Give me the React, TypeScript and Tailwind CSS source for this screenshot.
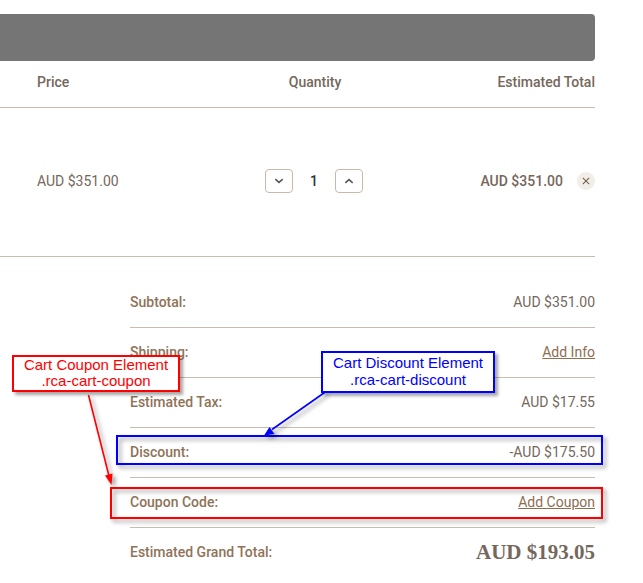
import { ReactNode } from "react";

type Highlight = "discount" | "coupon";

interface TotalRow {
  label: string;
  value: ReactNode;
  highlight?: Highlight;
}

const linkClass = "text-[#8f6d4f] underline";

const totals: TotalRow[] = [
  { label: "Subtotal:", value: "AUD $351.00" },
  { label: "Shipping:", value: <a href="#shipping" className={linkClass}>Add Info</a> },
  { label: "Estimated Tax:", value: "AUD $17.55" },
  { label: "Discount:", value: "-AUD $175.50", highlight: "discount" },
  {
    label: "Coupon Code:",
    value: <a href="#coupon" className={linkClass}>Add Coupon</a>,
    highlight: "coupon",
  },
];

const frames: Record<Highlight, string> = {
  discount: "-left-3.5 -right-2 top-[7px] h-[30px] border-[#0000ff]",
  coupon: "-left-5 -right-2 top-[9px] h-8 border-[#ff0000]",
};

function Chevron({ up = false }: { up?: boolean }) {
  return (
    <svg width="10" height="6" viewBox="0 0 10 6" fill="none" stroke="#555" strokeWidth="1.5" aria-hidden="true">
      <path d={up ? "M1.3 4.9 5 1.6l3.7 3.3" : "M1.3 1.1 5 4.4l3.7-3.3"} />
    </svg>
  );
}

const stepClass =
  "flex h-6 w-7 items-center justify-center rounded border border-[#cbb9a8] bg-white";

function CartTable() {
  return (
    <table className="w-full table-fixed border-collapse">
      <thead>
        <tr className="h-[46px] border-b border-[#c9bdb1] align-top">
          <th className="w-[240px] pt-[11px] pl-[37px] text-left font-medium">Price</th>
          <th className="w-[148px] pt-[11px] pl-0.5 text-center font-medium">Quantity</th>
          <th className="pt-[11px] text-right font-medium">Estimated Total</th>
        </tr>
      </thead>
      <tbody>
        <tr className="h-[149px] border-b border-[#c9bdb1]">
          <td className="pb-0.5 pl-[37px]">AUD $351.00</td>
          <td className="pb-0.5">
            <div className="flex items-center justify-center">
              <button type="button" aria-label="Decrease quantity" className={stepClass}>
                <Chevron />
              </button>
              <input
                aria-label="Quantity"
                defaultValue="1"
                className="w-[42px] bg-transparent text-center font-medium text-[#333]"
              />
              <button type="button" aria-label="Increase quantity" className={stepClass}>
                <Chevron up />
              </button>
            </div>
          </td>
          <td className="pb-0.5">
            <div className="flex items-center justify-end gap-3.5 font-medium">
              AUD $351.00
              <button
                type="button"
                aria-label="Remove item"
                className="flex size-[18px] items-center justify-center rounded-full bg-[#f1ede8]"
              >
                <svg width="8" height="8" viewBox="0 0 8 8" stroke="#7a6048" strokeWidth="1.1" aria-hidden="true">
                  <path d="M.8.8l6.4 6.4M7.2.8.8 7.2" />
                </svg>
              </button>
            </div>
          </td>
        </tr>
      </tbody>
    </table>
  );
}

function Annotations() {
  return (
    <>
      <svg
        className="pointer-events-none absolute top-0 left-0 drop-shadow-[3px_3px_2px_rgba(0,0,0,0.4)]"
        width="643"
        height="583"
        viewBox="0 0 643 583"
        aria-hidden="true"
      >
        <path d="M88.5 395 109 476" stroke="#ff0000" strokeWidth="1.6" />
        <path d="M111.5 485 105 475.5 112.5 473.5z" fill="#ff0000" />
        <path d="M326 391.5 272 429.5" stroke="#0000ff" strokeWidth="1.6" />
        <path d="M264 435.5 269.5 427 274.5 434z" fill="#0000ff" />
      </svg>
      <div className="absolute top-[355px] left-3 h-[37px] w-[168px] border-2 border-[#ff0000] bg-white text-center font-['Liberation_Sans',Arial,sans-serif] text-[15px] leading-4 text-[#ff0000] shadow-[3px_3px_3px_rgba(0,0,0,0.35)]">
        Cart Coupon Element
        <br />
        .rca-cart-coupon
      </div>
      <div className="absolute top-[351px] left-[321px] h-[42px] w-[174px] border-2 border-[#0000ff] bg-white pt-px text-center font-['Liberation_Sans',Arial,sans-serif] text-[15px] leading-[17px] text-[#0000ff] shadow-[3px_3px_3px_rgba(0,0,0,0.35)]">
        Cart Discount Element
        <br />
        .rca-cart-discount
      </div>
    </>
  );
}

export default function App() {
  return (
    <div className="relative min-h-screen bg-white pb-1 font-[Roboto,sans-serif] text-sm text-[#75675c]">
      <main className="mr-12 pt-3.5">
        <div className="h-[47px] rounded-r bg-[#757575]" />
        <CartTable />
        <dl className="mt-[21px] ml-[130px]">
          {totals.map((row) => (
            <div
              key={row.label}
              className="relative flex h-[50px] items-center justify-between border-b border-[#c9bdb1]"
            >
              <dt className="font-medium text-[#8f7358]">{row.label}</dt>
              <dd>{row.value}</dd>
              {row.highlight && (
                <span
                  className={`pointer-events-none absolute border-2 drop-shadow-[3px_3px_2px_rgba(0,0,0,0.4)] ${frames[row.highlight]}`}
                />
              )}
            </div>
          ))}
          <div className="flex h-12 items-center justify-between">
            <dt className="font-medium text-[#8f7358]">Estimated Grand Total:</dt>
            <dd className="font-['Liberation_Serif',serif] text-[21px] font-bold">AUD $193.05</dd>
          </div>
        </dl>
      </main>
      <Annotations />
    </div>
  );
}
